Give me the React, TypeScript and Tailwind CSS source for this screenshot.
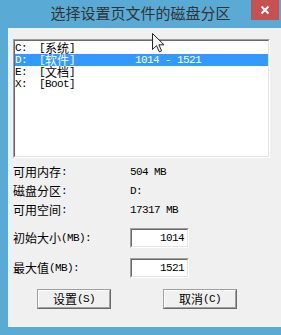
const A = "inline-block align-top h-[12px] leading-[12px] font-['Liberation_Mono',monospace] text-[11px] tracking-[-0.6px]";
const C = "inline-block align-top h-[12px] leading-[12px] font-['Noto_Sans_CJK_SC',sans-serif] text-[12px]";

function Ascii({ children }: { children: React.ReactNode }) {
  return <span className={A}>{children}</span>;
}

function Cjk({ children }: { children: React.ReactNode }) {
  return <span className={C}>{children}</span>;
}

const drives = [
  { letter: "C:", name: "系统", size: "" },
  { letter: "D:", name: "软件", size: "1014 - 1521" },
  { letter: "E:", name: "文档", size: "" },
  { letter: "X:", name: "Boot", size: "" },
];

function Sunken({ className, children }: { className: string; children?: React.ReactNode }) {
  return (
    <div className={`border border-t-[#a0a0a0] border-l-[#a0a0a0] border-b-white border-r-white ${className}`}>
      <div className="h-full w-full border border-t-[#696969] border-l-[#696969] border-b-[#e3e3e3] border-r-[#e3e3e3] bg-white">
        {children}
      </div>
    </div>
  );
}

function Button({ label, hot }: { label: string; hot: string }) {
  return (
    <div className="h-[20px] w-[74px] border border-t-[#a0a0a0] border-l-[#a0a0a0] border-b-[#696969] border-r-[#696969]">
      <div className="flex h-full w-full items-center justify-center border border-t-white border-l-white border-b-[#a0a0a0] border-r-[#a0a0a0] bg-[#f0f0f0] text-black">
        <Cjk>{label}</Cjk>
        <Ascii>({hot})</Ascii>
      </div>
    </div>
  );
}

function Label({ cjk, tail }: { cjk: string; tail: string }) {
  return (
    <span className="flex w-[117px] items-center">
      <Cjk>{cjk}</Cjk>
      <Ascii>{tail}</Ascii>
    </span>
  );
}

export default function App() {
  return (
    <div className="relative flex h-[335px] w-[281px] flex-col overflow-hidden bg-[#5aaad6]">
      {/* title bar */}
      <div className="relative flex h-[28px] shrink-0 items-center justify-center pb-[2px]">
        <span className="font-['Noto_Sans_CJK_SC',sans-serif] text-[15px] leading-[18px] text-[#333]">
          选择设置页文件的磁盘分区
        </span>
        <div className="absolute right-[2px] top-0 flex h-[20px] w-[28px] items-center justify-center bg-[#c75050]">
          <svg width="10" height="10" viewBox="0 0 10 10">
            <path d="M1.5 1.5 L8.5 8.5 M8.5 1.5 L1.5 8.5" stroke="white" strokeWidth="2" />
          </svg>
        </div>
      </div>

      {/* client area */}
      <div className="mb-[8px] ml-[8px] flex flex-1 flex-col bg-[#f0f0f0] text-black">
        <Sunken className="ml-[5px] mt-[11px] h-[119px] w-[257px]">
          <div className="pt-[1px]">
            {drives.map((d, i) => (
              <div
                key={d.letter}
                className={`flex h-[12px] items-center ${i === 1 ? "bg-[#3399ff] text-white" : ""}`}
              >
                <span className="flex w-[24px]">
                  <Ascii>{d.letter}</Ascii>
                </span>
                <span className="flex w-[96px] whitespace-nowrap">
                  <Ascii>[</Ascii>
                  {d.name === "Boot" ? <Ascii>{d.name}</Ascii> : <Cjk>{d.name}</Cjk>}
                  <Ascii>]</Ascii>
                </span>
                {d.size && <Ascii>{d.size}</Ascii>}
              </div>
            ))}
          </div>
        </Sunken>

        <div className="ml-[5px] mt-[8px] flex flex-col gap-[7px]">
          <div className="flex h-[12px] items-center">
            <Label cjk="可用内存" tail=":" />
            <Ascii>504 MB</Ascii>
          </div>
          <div className="flex h-[12px] items-center">
            <Label cjk="磁盘分区" tail=":" />
            <Ascii>D:</Ascii>
          </div>
          <div className="flex h-[12px] items-center">
            <Label cjk="可用空间" tail=":" />
            <Ascii>17317 MB</Ascii>
          </div>
        </div>

        <div className="ml-[5px] mt-[12px] flex h-[20px] items-center">
          <Label cjk="初始大小" tail="(MB):" />
          <Sunken className="h-[20px] w-[59px]">
            <div className="flex h-full items-center justify-end pr-[3px]">
              <Ascii>1014</Ascii>
            </div>
          </Sunken>
        </div>

        <div className="ml-[5px] mt-[10px] flex h-[20px] items-center">
          <Label cjk="最大值" tail="(MB):" />
          <Sunken className="h-[20px] w-[59px]">
            <div className="flex h-full items-center justify-end pr-[3px]">
              <Ascii>1521</Ascii>
            </div>
          </Sunken>
        </div>

        <div className="ml-[29px] mt-[11px] flex gap-[52px]">
          <Button label="设置" hot="S" />
          <Button label="取消" hot="C" />
        </div>
      </div>

      {/* mouse pointer */}
      <svg className="absolute left-[152px] top-[33px]" width="13" height="20" viewBox="0 0 13 20">
        <path
          d="M0.5 0.5 L0.5 16.5 L4.5 12.7 L7.3 18.8 L9.6 17.8 L6.9 11.8 L12 11.8 Z"
          fill="#f4f4f4"
          stroke="#222"
          strokeWidth="1"
          strokeLinejoin="round"
        />
      </svg>
    </div>
  );
}
